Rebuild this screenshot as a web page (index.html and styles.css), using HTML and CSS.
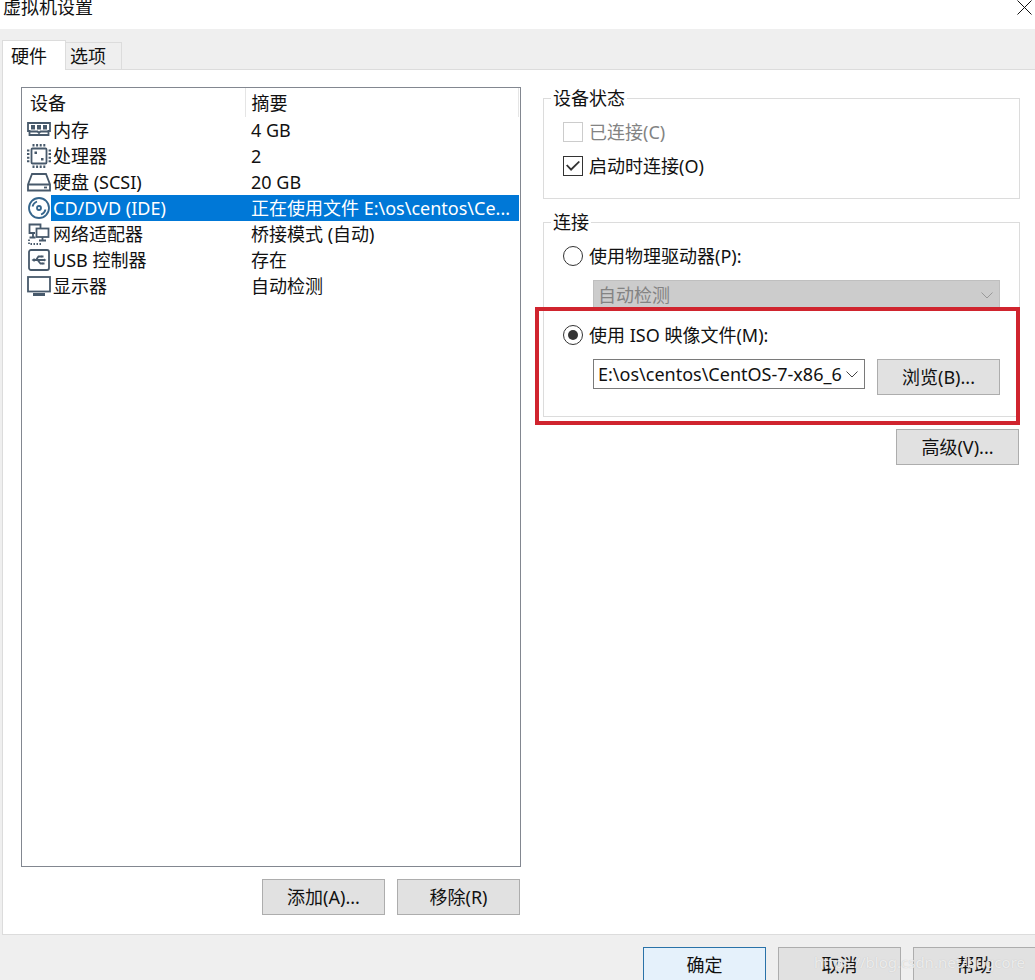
FILE: index.html
```html
<!DOCTYPE html>
<html lang="zh-CN">
<head>
    <meta charset="UTF-8" />
    <meta name="viewport" content="width=device-width, initial-scale=1.0" />
    <title>虚拟机设置</title>
    <link rel="stylesheet" href="styles.css">
</head>
<body>
    <div class="dialog">
        <header class="titlebar">
            <h1>虚拟机设置</h1>
            <button class="close" type="button" aria-label="关闭">
                <svg width="15" height="15" viewBox="0 0 15 15"><path d="M0.5 0.5L14.5 14.5M14.5 0.5L0.5 14.5" /></svg>
            </button>
        </header>

        <nav class="tabs" role="tablist">
            <button class="tab active" type="button" role="tab" aria-selected="true">硬件</button>
            <button class="tab" type="button" role="tab" aria-selected="false">选项</button>
        </nav>

        <main class="panel">
            <!-- Device list -->
            <section class="devices">
                <div class="device-list">
                    <table>
                        <thead>
                            <tr>
                                <th class="col-name">设备</th>
                                <th class="col-summary">摘要</th>
                            </tr>
                        </thead>
                        <tbody>
                            <tr>
                                <td>
                                    <div class="device">
                                        <svg class="icon" viewBox="0 0 24 24">
                                            <path d="M1 5h22v8h-1.500v4h-19v-4H1z" />
                                            <path class="fill" d="M4 7h4v4.500H4zM10 7h4v4.500h-4zM16 7h4v4.500h-4z" />
                                            <path d="M2 13.500h8.500l1.500 1.500 1.500-1.500H22" />
                                        </svg>
                                        <span>内存</span>
                                    </div>
                                </td>
                                <td>4 GB</td>
                            </tr>
                            <tr>
                                <td>
                                    <div class="device">
                                        <svg class="icon" viewBox="0 0 24 24">
                                            <rect x="4.500" y="4.500" width="15" height="15" rx="1" />
                                            <path class="pins" d="M5.500 1.200h13M5.500 22.800h13M1.200 5.500v13M22.800 5.500v13" />
                                            <path class="fill" d="M7.500 7.500H10V10H7.500zM14 14h2.500v2.500H14z" />
                                        </svg>
                                        <span>处理器</span>
                                    </div>
                                </td>
                                <td>2</td>
                            </tr>
                            <tr>
                                <td>
                                    <div class="device">
                                        <svg class="icon" viewBox="0 0 24 24">
                                            <path d="M1 14.500L5 4h14l4 10.500v6H1zM1 14.500h22" />
                                            <path d="M17 17.500h3" />
                                        </svg>
                                        <span>硬盘 (SCSI)</span>
                                    </div>
                                </td>
                                <td>20 GB</td>
                            </tr>
                            <tr class="selected">
                                <td>
                                    <div class="device">
                                        <svg class="icon" viewBox="0 0 24 24">
                                            <circle cx="12" cy="12" r="10" />
                                            <circle cx="12" cy="12" r="2" />
                                            <path d="M5.500 10.500a7 7 0 0 1 4.500-5M18.500 13.500a7 7 0 0 1-4.500 5" />
                                        </svg>
                                        <span>CD/DVD (IDE)</span>
                                    </div>
                                </td>
                                <td>正在使用文件 E:\os\centos\Ce...</td>
                            </tr>
                            <tr>
                                <td>
                                    <div class="device">
                                        <svg class="icon" viewBox="0 0 24 24">
                                            <path d="M8 11H2.500V2.500h11V6" />
                                            <path d="M6 11v4M2.500 15.500h6" />
                                            <rect x="9.500" y="6.500" width="12" height="8.500" />
                                            <path d="M15.500 15v3.500M12 18.500h7" />
                                            <path class="dots" d="M2 17.500v4.500h13" />
                                        </svg>
                                        <span>网络适配器</span>
                                    </div>
                                </td>
                                <td>桥接模式 (自动)</td>
                            </tr>
                            <tr>
                                <td>
                                    <div class="device">
                                        <svg class="icon" viewBox="0 0 24 24">
                                            <rect x="2" y="2" width="20" height="20" rx="2" />
                                            <path d="M6 12h12M9 12l2.500-3.500H15M10.500 12l3 3.500H16" />
                                            <path class="fill" d="M4.500 12l3-2v4zM14.500 7.500h2v2h-2zM15.500 14.500h2v2h-2zM17 10.500l2.500 1.500-2.500 1.500z" />
                                        </svg>
                                        <span>USB 控制器</span>
                                    </div>
                                </td>
                                <td>存在</td>
                            </tr>
                            <tr>
                                <td>
                                    <div class="device">
                                        <svg class="icon" viewBox="0 0 24 24">
                                            <rect x="1" y="3" width="22" height="14.500" />
                                            <path class="stand" d="M6 20.500h12" />
                                        </svg>
                                        <span>显示器</span>
                                    </div>
                                </td>
                                <td>自动检测</td>
                            </tr>
                        </tbody>
                    </table>
                </div>
                <div class="actions">
                    <button class="btn" type="button">添加(A)...</button>
                    <button class="btn" type="button">移除(R)</button>
                </div>
            </section>

            <!-- CD/DVD settings -->
            <section class="settings">
                <fieldset class="status">
                    <legend>设备状态</legend>
                    <label class="option disabled">
                        <input type="checkbox" disabled>
                        <span>已连接(C)</span>
                    </label>
                    <label class="option">
                        <input type="checkbox" checked>
                        <span>启动时连接(O)</span>
                    </label>
                </fieldset>

                <fieldset class="connection">
                    <legend>连接</legend>
                    <label class="option">
                        <input type="radio" name="source">
                        <span>使用物理驱动器(P):</span>
                    </label>
                    <div class="source-row">
                        <div class="combo">
                            <select aria-label="物理驱动器" disabled>
                                <option>自动检测</option>
                            </select>
                            <svg class="chevron" viewBox="0 0 12 7"><path d="M0.500 0.500L6 6l5.500-5.500" /></svg>
                        </div>
                    </div>
                    <div class="iso">
                        <label class="option">
                            <input type="radio" name="source" checked>
                            <span>使用 ISO 映像文件(M):</span>
                        </label>
                        <div class="source-row">
                            <div class="combo">
                                <select aria-label="ISO 映像文件">
                                    <option>E:\os\centos\CentOS-7-x86_6</option>
                                </select>
                                <svg class="chevron" viewBox="0 0 12 7"><path d="M0.500 0.500L6 6l5.500-5.500" /></svg>
                            </div>
                            <button class="btn" type="button">浏览(B)...</button>
                        </div>
                        <div class="highlight"></div>
                    </div>
                </fieldset>

                <div class="actions">
                    <button class="btn" type="button">高级(V)...</button>
                </div>
            </section>
        </main>

        <footer class="footer">
            <button class="btn primary" type="button">确定</button>
            <button class="btn" type="button">取消</button>
            <button class="btn" type="button">帮助</button>
            <span class="watermark">https://blog.csdn.net/bugcore</span>
        </footer>
    </div>
</body>
</html>
```
FILE: styles.css
```css
* {
    box-sizing: border-box;
}

body {
    margin: 0;
    overflow: hidden;
    background-color: #efefef;
    color: #111;
    font-family: "Noto Sans", "Noto Sans CJK SC", sans-serif;
    font-size: 18px;
    line-height: 26px;
}

button,
select {
    font: inherit;
    color: inherit;
}

/* Dialog frame */
.dialog {
    display: flex;
    flex-direction: column;
    height: 100vh;
}

.titlebar {
    display: flex;
    justify-content: space-between;
    align-items: flex-start;
    height: 29px;
    padding: 0 3px;
    background-color: #fff;
}

.titlebar h1 {
    margin: 0;
    font-size: 18px;
    font-weight: normal;
    line-height: 14px;
}

.close {
    display: flex;
    padding: 0;
    border: none;
    background: none;
}

.close svg {
    fill: none;
    stroke: #111;
}

/* Tabs */
.tabs {
    display: flex;
    align-items: flex-end;
    height: 40px;
    padding-left: 2px;
}

.tab {
    height: 27px;
    padding: 0 15px 0 4px;
    border: 1px solid #dcdcdc;
    border-width: 1px 1px 0 0;
    background-color: #efefef;
    line-height: 26px;
}

.tab.active {
    height: 30px;
    margin-bottom: -1px;
    padding: 0 18px 0 8px;
    border-left-width: 1px;
    background-color: #fff;
    z-index: 1;
}

.panel {
    flex: 1;
    display: grid;
    grid-template-columns: 500fr 477fr;
    gap: 22px;
    min-height: 0;
    margin-left: 2px;
    padding: 17px 15px 19px 18px;
    border: 1px solid #dcdcdc;
    border-right: none;
    background-color: #fff;
}

/* Device list */
.devices {
    display: flex;
    flex-direction: column;
    min-width: 0;
}

.device-list {
    flex: 1;
    padding-right: 1px;
    border: 1px solid #828790;
}

table {
    width: 100%;
    border-collapse: collapse;
    table-layout: fixed;
}

th {
    height: 29px;
    padding: 0 0 0 6px;
    border-right: 1px solid #e5e5e5;
    font-weight: normal;
    text-align: left;
}

.col-name {
    width: 223px;
    padding-left: 8px;
}

td {
    height: 26px;
    padding: 0;
    line-height: 26px;
    white-space: nowrap;
    overflow: hidden;
    text-overflow: ellipsis;
}

td + td {
    padding-left: 6px;
}

.device {
    display: flex;
    padding-left: 5px;
}

.device span {
    flex: 1;
    padding-left: 2px;
}

.selected td + td,
.selected .device span {
    background-color: #0078d7;
    color: #fff;
}

.icon {
    width: 24px;
    height: 26px;
    fill: none;
    stroke: #47596b;
    stroke-width: 1.8;
}

.icon .fill {
    fill: #47596b;
    stroke: none;
}

.icon .pins {
    stroke-width: 2.4;
    stroke-dasharray: 2 1.6;
}

.icon .dots {
    stroke-dasharray: 1.5 1.5;
}

.icon .stand {
    stroke-width: 3;
}

.selected .icon {
    stroke: #35658c;
}

/* Buttons */
.actions {
    display: flex;
    justify-content: flex-end;
    gap: 12px;
    margin-top: 12px;
    padding-right: 1px;
}

.btn {
    flex: none;
    width: 123px;
    height: 36px;
    padding: 0;
    border: 1px solid #adadad;
    background-color: #e1e1e1;
}

.btn.primary {
    border-color: #2a72a8;
    background-color: #e5f1fb;
}

/* Settings */
.settings {
    min-width: 0;
}

fieldset {
    min-width: 0;
    margin: 0 0 12px;
    padding: 6px 19px 15px;
    border: 1px solid #dcdcdc;
}

legend {
    margin-left: -12px;
    padding: 0 2px;
    line-height: 22px;
}

.connection {
    padding-bottom: 21px;
}

.option {
    display: flex;
    align-items: center;
    gap: 6px;
    height: 34px;
}

.option.disabled {
    color: #838383;
}

.option input {
    appearance: none;
    display: grid;
    place-content: center;
    width: 20px;
    height: 20px;
    margin: 0;
    border: 1px solid #333;
    background-color: #fff;
}

.option input:disabled {
    border-color: #ccc;
}

.option input[type="radio"] {
    border-radius: 50%;
}

.option input[type="radio"]:checked::after {
    content: "";
    width: 10px;
    height: 10px;
    border-radius: 50%;
    background-color: #333;
}

.option input[type="checkbox"]:checked::after {
    content: "";
    width: 14px;
    height: 10px;
    background-color: #333;
    clip-path: polygon(0 45%, 10% 34%, 36% 72%, 90% 0, 100% 10%, 36% 100%);
}

.source-row {
    display: flex;
    align-items: flex-start;
    gap: 12px;
    padding: 7px 0 0 30px;
}

.combo {
    flex: 1;
    position: relative;
    min-width: 0;
}

.combo select {
    appearance: none;
    display: block;
    width: 100%;
    height: 30px;
    padding: 0 20px 0 4px;
    border: 1px solid #7a7a7a;
    border-radius: 0;
    background-color: #fff;
}

.combo select:disabled {
    border-color: #bfbfbf;
    background-color: #ccc;
    color: #838383;
    opacity: 1;
}

.chevron {
    position: absolute;
    top: 12px;
    right: 7px;
    width: 12px;
    height: 7px;
    fill: none;
    stroke: #444;
    pointer-events: none;
}

.combo select:disabled + .chevron {
    stroke: #999;
}

/* Red frame around the ISO option */
.iso {
    position: relative;
    margin-top: 8px;
}

.highlight {
    position: absolute;
    inset: -11px -20px -30px -28px;
    border: 4px solid #d0242e;
    pointer-events: none;
}

/* Footer */
.footer {
    position: relative;
    display: flex;
    justify-content: flex-end;
    gap: 12px;
    height: 45px;
    margin-right: -1px;
    padding-top: 12px;
}

.watermark {
    position: absolute;
    right: 11px;
    bottom: 8px;
    color: rgba(255, 255, 255, 0.7);
    font-size: 15px;
    line-height: 20px;
    text-shadow: 0 0 1px #bbb;
    pointer-events: none;
}
```
